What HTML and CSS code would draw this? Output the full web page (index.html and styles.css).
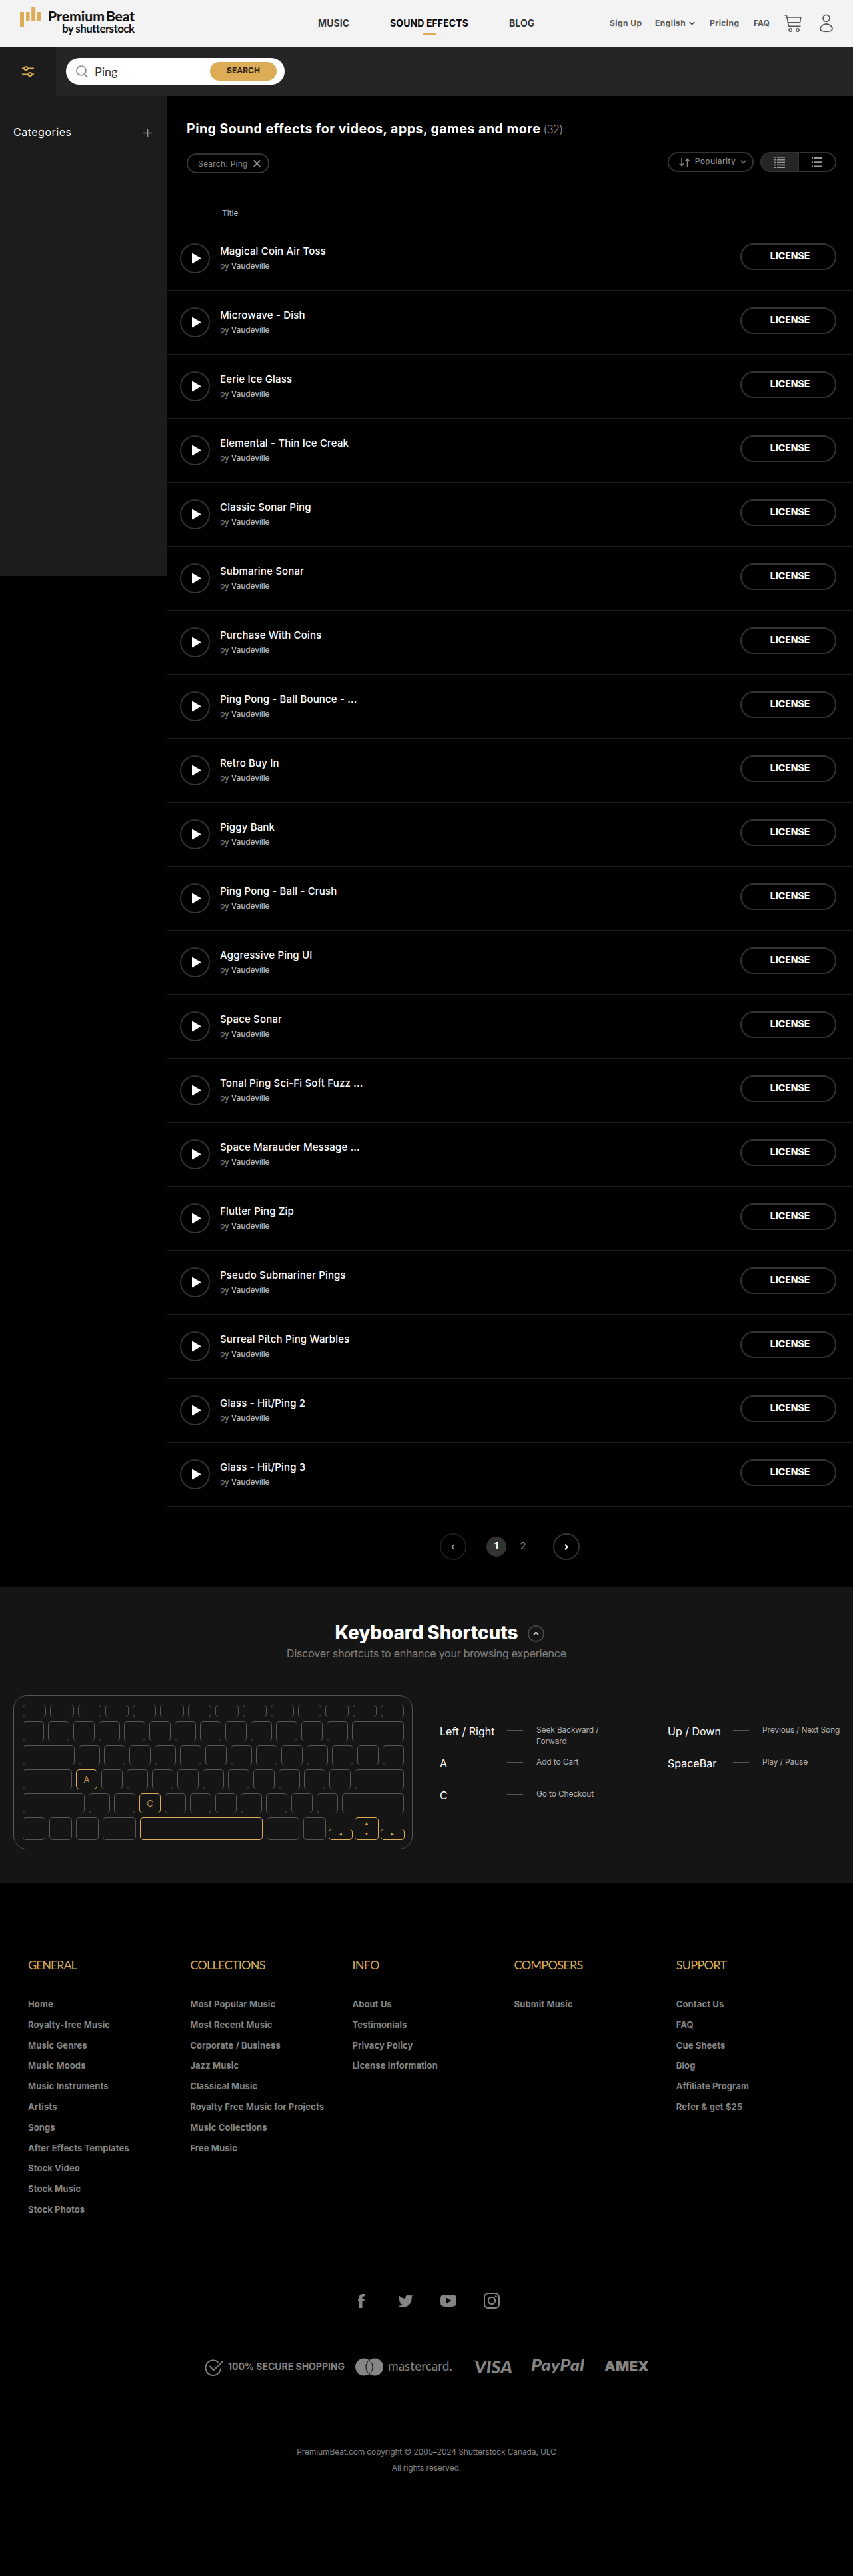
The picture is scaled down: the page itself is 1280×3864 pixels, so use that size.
FILE: index.html
```html
<!DOCTYPE html>
<html lang="en">
<head>
<meta charset="utf-8">
<title>Ping Sound Effects | PremiumBeat</title>
<link rel="stylesheet" href="styles.css">
</head>
<body>
<header class="header">
  <svg class="logo" width="176" height="70" viewBox="0 0 176 70">
    <g fill="#ddac56"><rect x="0" y="18" width="6" height="22"/><rect x="9" y="18" width="5.500" height="14"/><rect x="17.200" y="10" width="6" height="22"/><rect x="26" y="18" width="6" height="14"/></g>
    <g fill="#111" font-family="Lato, sans-serif"><text x="42" y="32" font-size="21" font-weight="900" textLength="85">Premium</text><text x="129" y="32" font-size="21" font-weight="900" textLength="43">Beat</text>
    <text x="63" y="49" font-size="17" font-weight="700" textLength="109">by shutterstock</text></g>
  </svg>
  <nav class="nav">
    <a class="nav-music">MUSIC</a>
    <a class="nav-effects">SOUND EFFECTS</a>
    <a class="nav-blog">BLOG</a>
  </nav>
  <div class="tools">
    <a class="t-sign">Sign Up</a>
    <a class="t-lang">English <svg width="9" height="6" viewBox="0 0 9 6" fill="none" stroke="#555" stroke-width="1.700"><path d="M.8 .8 4.500 4.500 8.200 .8"/></svg></a>
    <a class="t-price">Pricing</a>
    <a class="t-faq">FAQ</a>
  </div>
  <svg class="cart" width="28" height="28" viewBox="0 0 28 28" fill="none" stroke="#555" stroke-width="1.600"><path d="M0 1.800h4.300l3.200 16.400h18M4.900 5h20.700l-1 7.700H6.400"/><circle cx="10.200" cy="24" r="2.100"/><circle cx="21" cy="24" r="2.100"/></svg>
  <svg class="user" width="20" height="28" viewBox="0 0 20 28" fill="none" stroke="#555" stroke-width="1.700"><circle cx="10" cy="6.300" r="5"/><path d="M10 14.800c-5 0-9 4-9 7.800 0 3 4 3.800 9 3.800s9-.8 9-3.800c0-3.800-4-7.800-9-7.800z"/></svg>
</header>

<div class="searchbar">
  <div class="filter">
    <svg width="18" height="18" viewBox="0 0 18 18" fill="none" stroke="#ddac56" stroke-width="2"><path d="M0 4.500h3.300M9 4.500h9M0 13.500h9M14.700 13.500H18"/><circle cx="6" cy="4.500" r="2.600"/><circle cx="12" cy="13.500" r="2.600"/></svg>
  </div>
  <div class="search">
    <svg width="19" height="19" viewBox="0 0 19 19" fill="none" stroke="#888" stroke-width="1.700"><circle cx="8" cy="8" r="7"/><path d="m12 13 5.500 5"/></svg>
    <span class="query">Ping</span>
    <button class="go">SEARCH</button>
  </div>
</div>

<div class="body">
  <aside class="side">
    <span>Categories</span>
    <svg width="13" height="13" viewBox="0 0 13 13" stroke="#999" stroke-width="1.600"><path d="M0 6.500h13M6.500 0v13"/></svg>
  </aside>
  <main class="main">
    <h1>Ping Sound effects for videos, apps, games and more <small>(32)</small></h1>
    <div class="controls">
      <div class="tag">Search: Ping <svg width="11" height="11" viewBox="0 0 11 11" stroke="#999" stroke-width="1.800"><path d="m.7.7 9.600 9.600M10.300.7.7 10.300"/></svg></div>
      <div class="sort">
        <svg width="17" height="13" viewBox="0 0 17 13" fill="none" stroke="#858585" stroke-width="1.500"><path d="M4 0v11.500M.8 8.300 4 11.600l3.200-3.300M12.500 13V1M9.300 4.700l3.200-3.300 3.200 3.300"/></svg>
        <span>Popularity</span>
        <svg width="9" height="6" viewBox="0 0 9 6" fill="none" stroke="#858585" stroke-width="1.500"><path d="m.8.8 3.700 3.700L8.200.8"/></svg>
      </div>
      <div class="toggle">
        <div class="on"><svg width="16" height="17" viewBox="0 0 16 17" stroke="#999" stroke-width="1.600"><path d="M0 1h2M4 1h12M0 4.800h2M4 4.800h12M0 8.600h2M4 8.600h12M0 12.400h2M4 12.400h12M0 16.200h2M4 16.200h12"/></svg></div>
        <div><svg width="16" height="17" viewBox="0 0 16 17" stroke="#999" stroke-width="2.600"><path d="M0 2.300h2M4 2.300h12M0 8.500h2M4 8.500h12M0 14.700h2M4 14.700h12"/></svg></div>
      </div>
    </div>
    <div class="col-title">Title</div>
    <div class="row"><i class="play"></i><div class="info"><b>Magical Coin Air Toss</b><span>by <em>Vaudeville</em></span></div><button class="license">LICENSE</button></div>
    <div class="row"><i class="play"></i><div class="info"><b>Microwave - Dish</b><span>by <em>Vaudeville</em></span></div><button class="license">LICENSE</button></div>
    <div class="row"><i class="play"></i><div class="info"><b>Eerie Ice Glass</b><span>by <em>Vaudeville</em></span></div><button class="license">LICENSE</button></div>
    <div class="row"><i class="play"></i><div class="info"><b>Elemental - Thin Ice Creak</b><span>by <em>Vaudeville</em></span></div><button class="license">LICENSE</button></div>
    <div class="row"><i class="play"></i><div class="info"><b>Classic Sonar Ping</b><span>by <em>Vaudeville</em></span></div><button class="license">LICENSE</button></div>
    <div class="row"><i class="play"></i><div class="info"><b>Submarine Sonar</b><span>by <em>Vaudeville</em></span></div><button class="license">LICENSE</button></div>
    <div class="row"><i class="play"></i><div class="info"><b>Purchase With Coins</b><span>by <em>Vaudeville</em></span></div><button class="license">LICENSE</button></div>
    <div class="row"><i class="play"></i><div class="info"><b>Ping Pong - Ball Bounce - ...</b><span>by <em>Vaudeville</em></span></div><button class="license">LICENSE</button></div>
    <div class="row"><i class="play"></i><div class="info"><b>Retro Buy In</b><span>by <em>Vaudeville</em></span></div><button class="license">LICENSE</button></div>
    <div class="row"><i class="play"></i><div class="info"><b>Piggy Bank</b><span>by <em>Vaudeville</em></span></div><button class="license">LICENSE</button></div>
    <div class="row"><i class="play"></i><div class="info"><b>Ping Pong - Ball - Crush</b><span>by <em>Vaudeville</em></span></div><button class="license">LICENSE</button></div>
    <div class="row"><i class="play"></i><div class="info"><b>Aggressive Ping UI</b><span>by <em>Vaudeville</em></span></div><button class="license">LICENSE</button></div>
    <div class="row"><i class="play"></i><div class="info"><b>Space Sonar</b><span>by <em>Vaudeville</em></span></div><button class="license">LICENSE</button></div>
    <div class="row"><i class="play"></i><div class="info"><b>Tonal Ping Sci-Fi Soft Fuzz ...</b><span>by <em>Vaudeville</em></span></div><button class="license">LICENSE</button></div>
    <div class="row"><i class="play"></i><div class="info"><b>Space Marauder Message ...</b><span>by <em>Vaudeville</em></span></div><button class="license">LICENSE</button></div>
    <div class="row"><i class="play"></i><div class="info"><b>Flutter Ping Zip</b><span>by <em>Vaudeville</em></span></div><button class="license">LICENSE</button></div>
    <div class="row"><i class="play"></i><div class="info"><b>Pseudo Submariner Pings</b><span>by <em>Vaudeville</em></span></div><button class="license">LICENSE</button></div>
    <div class="row"><i class="play"></i><div class="info"><b>Surreal Pitch Ping Warbles</b><span>by <em>Vaudeville</em></span></div><button class="license">LICENSE</button></div>
    <div class="row"><i class="play"></i><div class="info"><b>Glass - Hit/Ping 2</b><span>by <em>Vaudeville</em></span></div><button class="license">LICENSE</button></div>
    <div class="row"><i class="play"></i><div class="info"><b>Glass - Hit/Ping 3</b><span>by <em>Vaudeville</em></span></div><button class="license">LICENSE</button></div>
    <div class="pages">
      <a class="step off"><svg width="6" height="9" viewBox="0 0 6 9" fill="none" stroke="#999" stroke-width="1.600"><path d="M5 .8 1.300 4.500 5 8.200"/></svg></a>
      <a class="page current">1</a>
      <a class="page">2</a>
      <a class="step"><svg width="6" height="9" viewBox="0 0 6 9" fill="none" stroke="#fff" stroke-width="2"><path d="m1 .8 3.700 3.700L1 8.200"/></svg></a>
    </div>
  </main>
</div>

<section class="shortcuts">
  <div class="sc-head">
    <h2>Keyboard Shortcuts</h2>
    <span class="collapse"><svg width="9" height="6" viewBox="0 0 9 6" fill="none" stroke="#fff" stroke-width="1.600"><path d="M1 5 4.500 1.500 8 5"/></svg></span>
  </div>
  <p class="sc-sub">Discover shortcuts to enhance your browsing experience</p>
  <div class="sc-body">
    <div class="kbd">
      <div class="krow fn"><i></i><i></i><i></i><i></i><i></i><i></i><i></i><i></i><i></i><i></i><i></i><i></i><i></i><i></i></div>
      <div class="krow"><i></i><i></i><i></i><i></i><i></i><i></i><i></i><i></i><i></i><i></i><i></i><i></i><i></i><i class="grow"></i></div>
      <div class="krow"><i class="grow"></i><i></i><i></i><i></i><i></i><i></i><i></i><i></i><i></i><i></i><i></i><i></i><i></i><i></i></div>
      <div class="krow"><i class="grow"></i><i class="hot">A</i><i></i><i></i><i></i><i></i><i></i><i></i><i></i><i></i><i></i><i></i><i class="grow"></i></div>
      <div class="krow"><i class="grow"></i><i></i><i></i><i class="hot">C</i><i></i><i></i><i></i><i></i><i></i><i></i><i></i><i class="grow"></i></div>
      <div class="krow last"><i></i><i></i><i></i><i class="cmd"></i><i class="space"></i><i class="cmd"></i><i></i>
        <div class="arrows"><i class="hot"><s class="l"></s></i><div class="ud"><i class="hot up"><s class="u"></s></i><i class="hot down"><s class="d"></s></i></div><i class="hot"><s class="r"></s></i></div>
      </div>
    </div>
    <dl class="keys">
      <div><dt>Left / Right</dt><hr><dd>Seek Backward / Forward</dd></div>
      <div><dt>A</dt><hr><dd>Add to Cart</dd></div>
      <div><dt>C</dt><hr><dd>Go to Checkout</dd></div>
    </dl>
    <div class="divider"></div>
    <dl class="keys second">
      <div><dt>Up / Down</dt><hr><dd>Previous / Next Song</dd></div>
      <div><dt>SpaceBar</dt><hr><dd>Play / Pause</dd></div>
    </dl>
  </div>
</section>

<footer class="footer">
  <div class="links">
    <div><h3 class="h-general">GENERAL</h3><ul><li>Home</li><li>Royalty-free Music</li><li>Music Genres</li><li>Music Moods</li><li>Music Instruments</li><li>Artists</li><li>Songs</li><li>After Effects Templates</li><li>Stock Video</li><li>Stock Music</li><li>Stock Photos</li></ul></div>
    <div><h3>COLLECTIONS</h3><ul><li>Most Popular Music</li><li>Most Recent Music</li><li>Corporate / Business</li><li>Jazz Music</li><li>Classical Music</li><li>Royalty Free Music for Projects</li><li>Music Collections</li><li>Free Music</li></ul></div>
    <div><h3>INFO</h3><ul><li>About Us</li><li>Testimonials</li><li>Privacy Policy</li><li>License Information</li></ul></div>
    <div><h3>COMPOSERS</h3><ul><li>Submit Music</li></ul></div>
    <div><h3>SUPPORT</h3><ul><li>Contact Us</li><li>FAQ</li><li>Cue Sheets</li><li>Blog</li><li>Affiliate Program</li><li>Refer &amp; get $25</li></ul></div>
  </div>
  <div class="social">
    <svg width="10" height="21" viewBox="0 0 10 21"><path d="M2 21V10.500H0V7h2V4.800C2 1.800 3.500 0 6.600 0H10v3.600H7.700C6.600 3.600 6.500 4.100 6.500 5v2H10l-.5 3.500h-3V21z"/></svg>
    <svg width="23" height="23" viewBox="0 0 24 24"><path d="M23.950 4.570a10 10 0 0 1-2.820.77 4.960 4.960 0 0 0 2.160-2.720c-.95.550-2 .96-3.130 1.180a4.920 4.920 0 0 0-8.380 4.480C7.690 8.100 4.070 6.130 1.640 3.160a4.820 4.820 0 0 0-.67 2.480c0 1.710.87 3.210 2.190 4.100a4.900 4.900 0 0 1-2.230-.62v.06a4.920 4.920 0 0 0 3.950 4.830 5 5 0 0 1-2.210.08 4.940 4.940 0 0 0 4.600 3.420A9.870 9.870 0 0 1 0 19.540a13.990 13.990 0 0 0 7.550 2.210c9.050 0 14-7.500 14-13.980 0-.21 0-.42-.02-.63a9.940 9.940 0 0 0 2.460-2.550z"/></svg>
    <svg width="24" height="18" viewBox="0 0 24 18"><path fill-rule="evenodd" d="M4 .6Q12-.4 20 .6 23.300 1 23.700 4q.6 5 0 10-.4 3-3.700 3.400-8 1-16 0Q.7 17 .3 14q-.6-5 0-10Q.7 1 4 .6zM9 4.800v8.400L16.500 9z"/></svg>
    <svg width="24" height="24" viewBox="0 0 24 24"><rect x="1" y="1" width="22" height="22" rx="5.500" fill="none" stroke="#858585" stroke-width="2"/><circle cx="12" cy="12" r="5.200" fill="none" stroke="#858585" stroke-width="2"/><circle cx="18.300" cy="5.700" r="1.600"/></svg>
  </div>
  <svg class="payments" width="676" height="50" viewBox="0 -10 676 50" fill="#858585">
    <g fill="none" stroke="#858585" stroke-width="1.900"><path d="M20.500 6.500A11.300 11.300 0 1 0 24 15.500"/><path d="m7.500 12 6 6.500L28 4" /></g>
    <text class="p-secure" x="35" y="17.500" textLength="175">100% SECURE SHOPPING</text>
    <circle cx="239" cy="13.500" r="13"/><circle cx="255" cy="13.500" r="13"/>
    <path d="M247 3.200a13 13 0 0 1 0 20.600 13 13 0 0 1 0-20.600z" stroke="#000" stroke-width="1"/>
    <text class="p-master" x="275" y="19" textLength="97">mastercard.</text>
    <text class="p-visa" x="405" y="23" textLength="57">VISA</text><path d="M403 3.500q5-.3 6.500 1.500l3 8q-3.500-7-9.500-9.500z"/>
    <text class="p-paypal" x="490" y="19" textLength="80" lengthAdjust="spacingAndGlyphs">PayPal</text>
    <text class="p-amex" x="600" y="20" textLength="67" lengthAdjust="spacingAndGlyphs">AMEX</text>
  </svg>
  <p class="copy">PremiumBeat.com copyright © 2005–2024 Shutterstock Canada, ULC</p>
  <p class="copy rights">All rights reserved.</p>
</footer>
</body>
</html>
```
FILE: styles.css
```css
* { box-sizing: border-box; margin: 0; padding: 0; }
body { background: #000; color: #fff; font-family: Inter, "Liberation Sans", sans-serif; width: 1280px; min-height: 3864px; }
svg { display: block; flex: none; }
button { font: inherit; background: none; border: 0; }
i, em { font-style: normal; }

.header { height: 70px; background: #f3f3f3; display: flex; align-items: center; padding-left: 30px; white-space: nowrap; }
.logo { margin-right: 271px; }
.nav { display: flex; gap: 61px; font-size: 14px; font-weight: 700; color: #333; letter-spacing: .1px; line-height: 34px; height: 34px; }
.nav-music { width: 47px; }
.nav-effects { width: 118px; color: #000; display: flex; flex-direction: column; align-items: center; }
.nav-effects::after { content: ""; width: 20px; height: 2px; background: #ddac56; margin-top: -2px; flex: none; }
.nav-blog { width: 39px; }
.tools { display: flex; margin-left: 112px; font-size: 12px; font-weight: 700; color: #555; letter-spacing: .45px; line-height: 34px; }
.t-sign { width: 68px; }
.t-lang { width: 82px; display: flex; align-items: center; gap: 5px; }
.t-price { width: 66px; }
.t-faq { width: 45px; letter-spacing: 0; }
.cart { margin-right: 26px; }

.searchbar { height: 74px; background: #252525; display: flex; align-items: center; }
.filter { width: 84px; height: 74px; background: #1c1c1c; display: flex; align-items: center; justify-content: center; }
.search { width: 328px; height: 40px; margin-left: 15px; background: #fff; border-radius: 20px; display: flex; align-items: center; padding: 0 12px 0 15px; }
.query { color: #333; font: 400 18px/38px Lato, sans-serif; margin-left: 9px; flex: 1; }
.go { width: 100px; height: 28px; border-radius: 14px; background: #ddac56; color: #2b2214; font-size: 12px; font-weight: 700; line-height: 26px; padding-bottom: 2px; }

.body { display: flex; height: 2236px; align-items: flex-start; }
.side { width: 250px; height: 720px; background: #1c1c1c; display: flex; justify-content: space-between; padding: 43px 22px 0 20px; font-size: 16px; line-height: 22px; letter-spacing: .5px; }
.side svg { margin-top: 6px; }
.main { width: 1030px; padding-top: 35px; }
h1 { margin-left: 30px; height: 28px; font-size: 19.500px; font-weight: 700; line-height: 28px; letter-spacing: .5px; white-space: nowrap; }
h1 small { font-size: 17px; font-weight: 300; line-height: 20px; letter-spacing: -.9px; color: #959595; margin-left: -1px; }
.controls { display: flex; margin: 21px 25px 0 30px; height: 32px; font-size: 12px; color: #8c8c8c; }
.tag { width: 124px; height: 30px; margin-top: 2px; border: 2px solid #333; border-radius: 15px; padding: 0 11px 0 15px; display: flex; align-items: center; justify-content: space-between; letter-spacing: .25px; white-space: nowrap; }
.sort { width: 129px; height: 30px; margin-left: auto; border: 2px solid #333; border-radius: 15px; display: flex; align-items: center; padding: 0 9px 0 15px; justify-content: space-between; font-weight: 500; letter-spacing: .3px; }
.sort span { margin-top: -3px; }
.toggle { width: 114px; height: 30px; margin-left: 10px; border: 2px solid #333; border-radius: 15px; display: flex; overflow: hidden; }
.toggle div { flex: 1; display: flex; align-items: center; justify-content: center; }
.toggle .on { background: #252525; border-right: 2px solid #333; }
.col-title { margin: 50px 0 10px 83px; font-size: 12px; line-height: 20px; color: #b5b5b5; }
.row { height: 96px; border-bottom: 1px solid #1c1c1c; display: flex; padding: 25px 25px 0 20px; }
.play { width: 45px; height: 45px; border: 2px solid #333; border-radius: 50%; display: flex; align-items: center; padding-left: 16px; }
.play::before { content: ""; width: 14px; height: 16px; background: #fff; clip-path: polygon(0 0, 100% 50%, 0 100%); }
.info { margin-left: 15px; flex: 1; display: flex; flex-direction: column; gap: 4px; padding-top: 2px; }
.info b { font-size: 15px; font-weight: 500; line-height: 20px; letter-spacing: .17px; }
.info span { font-size: 12px; line-height: 16px; color: #858585; letter-spacing: -.15px; }
.info em { color: #b8b8b8; font-weight: 500; }
.license { width: 144px; height: 40px; border: 2px solid #333; border-radius: 20px; color: #fff; font-size: 14px; font-weight: 800; letter-spacing: 0; padding: 0 0 3px 5px; }
.pages { height: 120px; display: flex; align-items: center; justify-content: center; gap: 10px; }
.step { width: 40px; height: 40px; border: 2px solid #333; border-radius: 50%; display: flex; align-items: center; justify-content: center; margin-left: 20px; }
.step.off { border-color: #1c1c1c; margin: 0 20px 0 0; }
.page { width: 30px; height: 30px; border-radius: 50%; text-align: center; font-size: 15px; line-height: 28px; color: #858585; }
.page.current { background: #333; color: #fff; font-weight: 600; }

.shortcuts { height: 444px; background: #151515; padding-top: 50px; }
.sc-head { display: flex; justify-content: center; align-items: center; gap: 15px; height: 38px; padding-left: 40px; }
h2 { font-size: 28px; font-weight: 800; line-height: 38px; letter-spacing: -.15px; white-space: nowrap; }
.collapse { width: 25px; height: 25px; border: 2px solid #454545; border-radius: 50%; display: flex; align-items: center; justify-content: center; margin-top: 2px; }
.sc-sub { text-align: center; font-size: 16px; line-height: 20px; letter-spacing: -.22px; margin-top: 2px; color: #808080; }
.sc-body { display: flex; margin: 53px 0 0 20px; height: 231px; }
.kbd { width: 599px; height: 231px; border: 1px solid #555; border-radius: 20px; padding: 13px; display: flex; flex-direction: column; gap: 6px; }
.krow { display: flex; gap: 6px; height: 30px; width: 572px; flex: none; }
.krow i { width: 32px; border: 1px solid #555; border-radius: 5px; flex: none; }
.krow.fn { height: 19px; }
.krow.fn i, .krow .grow { flex: 1; }
.krow .hot, .krow .space { border-color: #ddac56; }
.krow .hot { color: #ddac56; display: flex; align-items: center; justify-content: center; font-size: 13px; font-weight: 300; }
.krow.last { height: 34px; }
.krow.last i { width: 34px; }
.krow.last .cmd { width: 49.500px; }
.krow.last .space { width: 184px; }
.arrows { display: flex; align-items: flex-end; gap: 3px; margin-left: -2px; }
.krow.last .arrows i { width: 36px; height: 17px; }
.krow.last .ud .up { height: 18px; border-radius: 5px 5px 0 0; }
.krow.last .ud .down { border-top: 0; height: 16px; border-radius: 0 0 5px 5px; }
.arrows s { width: 4px; height: 4px; background: #ddac56; }
.arrows .l { clip-path: polygon(100% 0, 0 50%, 100% 100%); }
.arrows .r { clip-path: polygon(0 0, 100% 50%, 0 100%); }
.arrows .u { clip-path: polygon(0 100%, 50% 0, 100% 100%); }
.arrows .d { clip-path: polygon(0 0, 50% 100%, 100% 0); }
.keys { width: 309px; margin: 44px 0 0 41px; }
.keys > div { display: flex; height: 48px; align-items: flex-start; }
.keys dt { width: 101px; font-size: 16px; line-height: 20px; white-space: nowrap; }
.keys hr { width: 24px; border: 0; border-top: 1px solid #555; margin: 8px 20px 0 0; }
.keys dd { width: 120px; font-size: 12px; line-height: 17px; letter-spacing: -.15px; color: #b0b0b0; margin-top: -1px; }
.divider { width: 1px; height: 96px; background: #555; margin-top: 44px; }
.keys.second { margin-left: 32px; width: 270px; }
.keys.second dt { width: 98px; }

.footer { padding-top: 112px; }
.links { display: grid; grid-template-columns: repeat(5, 243.200px); margin-left: 42px; height: 394px; }
h3 { font: 400 18px/22px Lato, sans-serif; color: #ddac56; letter-spacing: -.7px; }
.h-general { letter-spacing: -1.100px; }
ul { list-style: none; margin-top: 33px; }
li { font-size: 13px; font-weight: 700; line-height: 30.800px; color: #858585; letter-spacing: .12px; white-space: nowrap; }
.social { display: flex; align-items: center; height: 24px; margin: 109px 0 0 537px; fill: #858585; }
.social svg + svg { margin-left: 50px; }
.social svg + svg + svg { margin-left: 41px; }
.payments { margin: 64px 0 0 307px; }
.p-secure { font-size: 14px; font-weight: 700; }
.p-master { font-family: Lato, sans-serif; font-size: 19px; }
.p-visa { font: italic 900 27px Lato, sans-serif; }
.p-paypal { font: italic 900 23px Lato, sans-serif; }
.p-amex { font-size: 20px; font-weight: 900; }
.copy { text-align: center; font-size: 12px; line-height: 24px; color: #858585; letter-spacing: -.12px; margin-top: 89px; }
.rights { margin-top: 0; }
```
